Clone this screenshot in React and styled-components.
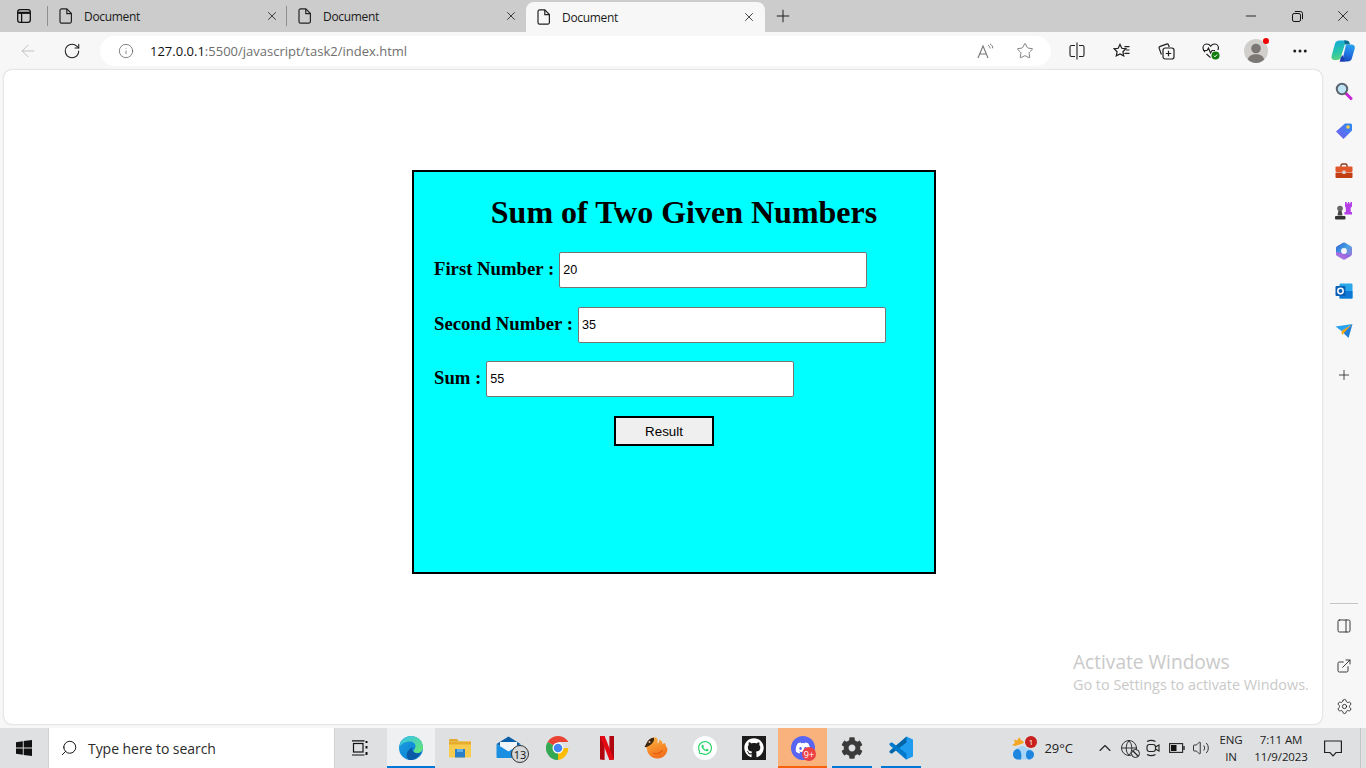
import styled, { createGlobalStyle } from "styled-components";
import {
  ArrowLeft,
  RotateCw,
  Info,
  Star,
  Plus,
  X,
  Minus,
  MoreHorizontal,
  Search,
  ChevronUp,
  Globe,
  Volume2,
  Settings,
  ExternalLink,
  PanelRight,
} from "lucide-react";
import { FaGithub, FaWhatsapp, FaDiscord, FaCog } from "react-icons/fa";

const GlobalStyle = createGlobalStyle`
  html, body {
    margin: 0;
    padding: 0;
    background: #f7f7f7;
    overflow: hidden;
  }
  * {
    box-sizing: border-box;
  }
`;

const uiFont = `"Open Sans", "Noto Sans", Arial, sans-serif`;

const Window = styled.div`
  width: 1366px;
  height: 768px;
  display: flex;
  flex-direction: column;
  overflow: hidden;
  font-family: ${uiFont};
  color: #1a1a1a;
`;

/* ---------- tab strip ---------- */
const TabStrip = styled.div`
  height: 32px;
  flex: none;
  display: flex;
  align-items: flex-end;
  background: #cccccc;
`;

const WorkspaceButton = styled.div`
  width: 47px;
  height: 32px;
  display: flex;
  align-items: center;
  justify-content: center;
`;

const TabSeparator = styled.div`
  width: 1px;
  height: 20px;
  margin-bottom: 6px;
  background: #8f8f8f;
`;

const Tab = styled.div`
  width: ${(p) => (p.$active ? "239px" : "238px")};
  height: ${(p) => (p.$active ? "30px" : "32px")};
  display: flex;
  align-items: center;
  padding: ${(p) => (p.$active ? "0 9px 0 11px" : "0 7px 0 11px")};
  background: ${(p) => (p.$active ? "#f7f7f7" : "transparent")};
  border-radius: ${(p) => (p.$active ? "8px 8px 0 0" : "0")};
  margin-left: ${(p) => (p.$active ? "1px" : "0")};
`;

const TabTitle = styled.span`
  margin-left: 11px;
  font-size: 12px;
  letter-spacing: -0.32px;
  flex: 1;
`;

const NewTab = styled.div`
  width: 36px;
  height: 32px;
  display: flex;
  align-items: center;
  justify-content: center;
`;

const WindowControls = styled.div`
  margin-left: auto;
  height: 32px;
  display: flex;
`;

const WindowButton = styled.div`
  width: 46px;
  display: flex;
  align-items: center;
  justify-content: center;
`;

/* ---------- toolbar ---------- */
const Toolbar = styled.div`
  height: 38px;
  flex: none;
  display: flex;
  align-items: center;
  background: #f7f7f7;
`;

const NavButton = styled.div`
  width: 44px;
  height: 30px;
  display: flex;
  align-items: center;
  justify-content: center;
`;

const NavGroup = styled.div`
  width: 100px;
  padding-left: 6px;
  display: flex;
`;

const AddressBar = styled.div`
  width: 951px;
  height: 30px;
  display: flex;
  align-items: center;
  padding: 0 17px 0 18px;
  background: #ffffff;
  border-radius: 15px;
`;

const Url = styled.div`
  margin-left: 16px;
  font-size: 13px;
  letter-spacing: 0;
  color: #6f6f6f;
  flex: 1;
`;

const UrlHost = styled.span`
  color: #111111;
`;

const AddressActions = styled.div`
  display: flex;
  align-items: center;
  gap: 22px;
`;

const ToolButtons = styled.div`
  display: flex;
  align-items: center;
  margin-left: 4px;
`;

const ToolButton = styled.div`
  width: ${(p) => (p.$narrow ? "41px" : "44.6px")};
  height: 30px;
  position: relative;
  display: flex;
  align-items: center;
  justify-content: center;
`;

const RedDot = styled.span`
  position: absolute;
  top: 2px;
  right: 9px;
  width: 6px;
  height: 6px;
  border-radius: 50%;
  background: #f00000;
`;

/* ---------- page area ---------- */
const Main = styled.div`
  flex: 1;
  display: flex;
  background: #f7f7f7;
  min-height: 0;
`;

const Page = styled.div`
  position: relative;
  width: 1318px;
  height: 654px;
  margin-left: 4px;
  background: #ffffff;
  border-radius: 8px;
  box-shadow: 0 0 2px rgba(0, 0, 0, 0.25);
  padding: 100px 0 0 408px;
`;

const Card = styled.div`
  width: 524px;
  height: 404px;
  border: 2px solid #000000;
  background: #00ffff;
  padding: 22px 0 0 20px;
  font-family: "Liberation Serif", "Times New Roman", serif;
  color: #000000;
`;

const Heading = styled.h1`
  margin: 0 0 21px;
  height: 37px;
  font-size: 32px;
  line-height: 37px;
  font-weight: 700;
  text-align: center;
`;

const FieldRow = styled.div`
  height: 36px;
  margin-bottom: 18.5px;
  display: flex;
  align-items: center;
  gap: 5px;
`;

const FieldLabel = styled.label`
  font-size: 18.72px;
  font-weight: 700;
  padding-bottom: 2px;
`;

const FieldInput = styled.input`
  width: 308px;
  height: 36px;
  padding: 1px 3px;
  border: 1px solid #767676;
  border-radius: 2px;
  background: #ffffff;
  font-family: "Liberation Sans", Arial, sans-serif;
  font-size: 12.6px;
  color: #000000;
`;

const ResultButton = styled.button`
  display: block;
  width: 100px;
  height: 30px;
  margin-left: 180px;
  padding: 2px 0 0;
  border: 2px solid #000000;
  border-radius: 0;
  background: #efefef;
  font-family: "Liberation Sans", Arial, sans-serif;
  font-size: 13.33px;
  color: #000000;
`;

const Watermark = styled.div`
  position: absolute;
  left: 1069px;
  top: 579px;
  color: #c9c9c9;
  pointer-events: none;
`;

const WatermarkTitle = styled.div`
  font-size: 19.1px;
  line-height: 27px;
`;

const WatermarkText = styled.div`
  font-size: 14.4px;
  line-height: 18px;
`;

/* ---------- edge sidebar ---------- */
const Sidebar = styled.div`
  flex: 1;
  height: 656px;
  display: flex;
  flex-direction: column;
  align-items: center;
  padding-top: 1px;
`;

const SideButton = styled.div`
  width: 44px;
  height: 40px;
  flex: none;
  display: flex;
  align-items: center;
  justify-content: center;
  margin-top: ${(p) => p.$gap || 0}px;
`;

const SideDivider = styled.div`
  width: 28px;
  height: 1px;
  margin-top: auto;
  margin-bottom: 2px;
  background: #c4c4c4;
`;

/* ---------- taskbar ---------- */
const Taskbar = styled.div`
  height: 40px;
  flex: none;
  display: flex;
  background: #dfe0e1;
`;

const StartButton = styled.div`
  width: 48px;
  display: flex;
  align-items: center;
  justify-content: center;
`;

const SearchBox = styled.div`
  width: 287px;
  display: flex;
  align-items: center;
  padding-left: 11px;
  background: #ffffff;
  border: 1px solid #cfd2d3;
  border-width: 0 1px;
`;

const SearchText = styled.span`
  margin-left: 10px;
  font-size: 14px;
  color: #2b2b2b;
  letter-spacing: -0.05px;
`;

const TaskView = styled.div`
  width: 52px;
  padding-right: 3px;
  display: flex;
  align-items: center;
  justify-content: center;
`;

const TaskItem = styled.div`
  position: relative;
  width: ${(p) => p.$width || 49}px;
  display: flex;
  align-items: center;
  justify-content: center;
  background: ${(p) => p.$bg || "transparent"};
  &::after {
    content: "";
    position: absolute;
    bottom: 0;
    left: ${(p) => (p.$wide ? "0" : "5px")};
    right: ${(p) => (p.$wide ? "0" : "4px")};
    height: 2px;
    background: ${(p) => p.$line || "transparent"};
  }
`;

const Badge = styled.span`
  position: absolute;
  font-family: ${uiFont};
  font-size: ${(p) => p.$size || 9}px;
  line-height: 1;
  display: flex;
  align-items: center;
  justify-content: center;
  border-radius: 50%;
  right: ${(p) => p.$right}px;
  top: ${(p) => p.$top}px;
  width: ${(p) => p.$box}px;
  height: ${(p) => p.$box}px;
  color: ${(p) => p.$color};
  background: ${(p) => p.$bg};
  border: ${(p) => p.$border || "none"};
`;

const Tray = styled.div`
  margin-left: auto;
  display: flex;
  align-items: center;
  height: 40px;
`;

const Weather = styled.div`
  position: relative;
  display: flex;
  align-items: center;
  gap: 9px;
  margin-right: 20px;
  font-size: 13px;
  color: #222222;
`;

const TrayIcon = styled.div`
  width: 24px;
  display: flex;
  align-items: center;
  justify-content: center;
`;

const TrayStack = styled.div`
  width: ${(p) => p.$w}px;
  display: flex;
  flex-direction: column;
  align-items: center;
  font-size: 11.5px;
  line-height: 17px;
  color: #222222;
  letter-spacing: -0.1px;
`;

const NotifyButton = styled.div`
  width: 29px;
  display: flex;
  justify-content: flex-end;
`;

const ShowDesktop = styled.div`
  width: 6px;
  height: 40px;
  margin-left: 18px;
  border-left: 1px solid #c3c6c7;
`;

const stroke = { strokeWidth: 1.4, color: "#1f1f1f" };

const DocIcon = () => (
  <svg width="14" height="16" viewBox="0 0 14 16" fill="none" stroke="#222" strokeWidth="1.2">
    <path d="M2.6.9h5.2l4.6 4.6v8a1.6 1.6 0 0 1-1.6 1.6H2.6A1.6 1.6 0 0 1 1 13.5V2.5A1.6 1.6 0 0 1 2.6.9z" />
    <path d="M7.8 1v4.6h4.6" />
  </svg>
);

const WorkspaceIcon = () => (
  <svg width="14" height="14" viewBox="0 0 14 14" fill="none" stroke="#111" strokeWidth="1.3">
    <rect x=".7" y=".7" width="12.6" height="12.6" rx="2.4" />
    <path d="M1 3.8h12" strokeWidth="2.2" />
    <path d="M4.6 4v9" />
  </svg>
);

const RestoreIcon = () => (
  <svg width="11" height="11" viewBox="0 0 11 11" fill="none" stroke="#111" strokeWidth="1">
    <rect x=".5" y="2.5" width="8" height="8" rx="1.6" />
    <path d="M2.8.5h5.6a2.1 2.1 0 0 1 2.1 2.1v5.600" />
  </svg>
);

const ReadAloudIcon = () => (
  <svg width="17" height="16" viewBox="0 0 17 16" fill="none" stroke="#777" strokeWidth="1.1">
    <path d="M1 15L6 3l5 12M2.8 11h6.400" />
    <path d="M11 2.200c1.300.8 2 2 2 3.200M13 .8c1.700 1 2.800 2.700 2.800 4.500" strokeWidth="1" />
  </svg>
);

const SplitIcon = () => (
  <svg width="16" height="18" viewBox="0 0 16 18" fill="none" stroke="#1f1f1f" strokeWidth="1.1">
    <path d="M6 3.500H2.500A1.500 1.500 0 0 0 1 5v8a1.500 1.500 0 0 0 1.500 1.500H6" />
    <path d="M10 3.500h3.500A1.500 1.500 0 0 1 15 5v8a1.500 1.500 0 0 1-1.500 1.500H10" />
    <path d="M8 .5v17" />
  </svg>
);

const FavListIcon = () => (
  <svg width="18" height="17" viewBox="0 0 18 17" fill="none" stroke="#1f1f1f" strokeWidth="1.2">
    <path d="M7 1.400l1.800 3.900 4.100.5-3 2.900.8 4.200L7 10.900l-3.700 2 .8-4.200-3-2.900 4.100-.5z" />
    <path d="M11.500 3.600h5M13 7h3.500M11.500 10.400h5" />
  </svg>
);

const CollectionsIcon = () => (
  <svg width="17" height="17" viewBox="0 0 17 17" fill="none" stroke="#1f1f1f" strokeWidth="1.2">
    <path d="M3.400 11.500L1.200 5.400a1.600 1.600 0 0 1 1-2L8.500 1.100a1.600 1.600 0 0 1 2 .9l.7 2" />
    <rect x="5" y="5" width="11" height="11" rx="2.200" />
    <path d="M10.500 7.800v5.400M7.800 10.500h5.400" />
  </svg>
);

const HealthIcon = () => (
  <svg width="18" height="18" viewBox="0 0 18 18" fill="none">
    <path
      d="M3 10.200C1.800 8.800 1 7.600 1 5.800 1 3.600 2.800 2 4.800 2c1.600 0 3 .8 3.900 2.200C9.600 2.800 11 2 12.600 2c2 0 3.800 1.600 3.800 3.800 0 .8-.2 1.500-.5 2.200M4.500 12l4 3.600"
      stroke="#1f1f1f"
      strokeWidth="1.2"
    />
    <path d="M1 8.500h4l1.500-2.500 2 5 1.500-2.500h3" stroke="#1f1f1f" strokeWidth="1.1" />
    <circle cx="13.500" cy="13.500" r="4" fill="#107c10" />
    <path d="M11.800 13.600l1.200 1.200 2.200-2.400" stroke="#fff" strokeWidth="1" />
  </svg>
);

const ProfileIcon = () => (
  <svg width="24" height="24" viewBox="0 0 24 24">
    <circle cx="12" cy="12" r="12" fill="#d1cfcc" />
    <circle cx="12" cy="9.500" r="4.800" fill="#7a7774" />
    <path d="M3.800 20.500c1-3.800 4-5.300 8.200-5.300s7.200 1.500 8.200 5.300A12 12 0 0 1 12 24a12 12 0 0 1-8.200-3.500z" fill="#7a7774" />
  </svg>
);

const CopilotIcon = () => (
  <svg width="24" height="24" viewBox="0 0 24 24">
    <defs>
      <linearGradient id="copA" x1="0.3" y1="0" x2="0.5" y2="1">
        <stop offset="0" stopColor="#16a8d8" />
        <stop offset="0.6" stopColor="#27c6a8" />
        <stop offset="1" stopColor="#5fd47c" />
      </linearGradient>
      <linearGradient id="copB" x1="0.6" y1="0" x2="0.4" y2="1">
        <stop offset="0" stopColor="#2aa0ee" />
        <stop offset="0.6" stopColor="#1f6fe0" />
        <stop offset="1" stopColor="#1a48b8" />
      </linearGradient>
    </defs>
    <path d="M8.500 1.500H15L10 18c-.6 2-2 3-4 3H3.500C1.200 21 0 19.200.6 17L3.800 5.200C4.500 2.800 6 1.500 8.500 1.500z" fill="url(#copA)" />
    <path d="M13 1.500h2.500c1.500 0 2.500.8 3 2.300l.5 1.700H14z" fill="#0b6a8f" />
    <path d="M15 5.500h5.500c2.300 0 3.800 1.800 3.200 4L21 19c-.7 2.600-2.400 3.500-4.500 3.500H8c2 0 3.200-1.300 3.800-3.200z" fill="url(#copB)" />
    <path d="M9.500 19l2-3 2.500 6.500H8.500c.5-.3.800-2 1-3.500z" fill="#1c3fb0" />
  </svg>
);

const MagnifierIcon = () => (
  <svg width="18" height="18" viewBox="0 0 18 18">
    <path d="M10.500 11l5.500 5.500" stroke="#c724d8" strokeWidth="3" strokeLinecap="round" />
    <circle cx="7" cy="7" r="5.200" fill="#bfe3f5" stroke="#5b6670" strokeWidth="2" />
  </svg>
);

const TagIcon = () => (
  <svg width="18" height="18" viewBox="0 0 18 18">
    <defs>
      <linearGradient id="tagA" x1="0" y1="1" x2="1" y2="0">
        <stop offset="0" stopColor="#7a5cf0" />
        <stop offset="1" stopColor="#2a8cf0" />
      </linearGradient>
    </defs>
    <path d="M10 1.500h5.500a1.500 1.500 0 0 1 1.500 1.500v5.500L8.500 17 1 9.500z" fill="url(#tagA)" />
    <circle cx="13" cy="5" r="1.800" fill="#f6d04d" />
  </svg>
);

const ToolboxIcon = () => (
  <svg width="18" height="16" viewBox="0 0 18 16">
    <path d="M6 4V2.500C6 1.700 6.700 1 7.500 1h3c.8 0 1.500.7 1.500 1.500V4" fill="none" stroke="#8a3a1a" strokeWidth="1.400" />
    <rect x="0.500" y="3.500" width="17" height="5.500" rx="1" fill="#e0572a" />
    <rect x="0.500" y="9.500" width="17" height="5.500" rx="1" fill="#c43e14" />
    <rect x="7.500" y="7.500" width="3" height="3.500" rx=".6" fill="#d8d8d8" />
  </svg>
);

const ChessIcon = () => (
  <svg width="18" height="18" viewBox="0 0 18 18">
    <path d="M10 0h1.600v1.500h1.300V0h1.300v1.500h1.300V0H17v4.500l-1.300 1.200V10H17v2.500H9.500V10h1.300V5.700L10 4.500z" fill="#b43ee8" />
    <circle cx="5" cy="6.500" r="2.800" fill="#666" />
    <path d="M3.300 9h3.400l.8 4.500H2.500z" fill="#4a4a4a" />
    <rect x="0" y="14" width="10.500" height="3.500" rx="1" fill="#333" />
  </svg>
);

const M365Icon = () => (
  <svg width="18" height="18" viewBox="0 0 18 18">
    <defs>
      <linearGradient id="msA" x1="0" y1="0" x2="1" y2="1">
        <stop offset="0" stopColor="#2a5fd8" />
        <stop offset="0.5" stopColor="#4aa3e0" />
        <stop offset="1" stopColor="#b668d8" />
      </linearGradient>
      <linearGradient id="msB" x1="0" y1="1" x2="1" y2="0">
        <stop offset="0" stopColor="#c67ae0" />
        <stop offset="1" stopColor="#7a5ce0" />
      </linearGradient>
    </defs>
    <path d="M8 .8a2 2 0 0 1 2 0l6 3.400a2 2 0 0 1 1 1.700v6.200a2 2 0 0 1-1 1.700l-6 3.400a2 2 0 0 1-2 0l-6-3.400a2 2 0 0 1-1-1.700V5.900a2 2 0 0 1 1-1.700z" fill="url(#msA)" />
    <path d="M1 10v2.100c0 .7.400 1.300 1 1.700l6 3.400c.6.400 1.400.4 2 0l6-3.400-7-2.800z" fill="url(#msB)" />
    <circle cx="9" cy="9" r="2.900" fill="#f7f7f7" />
  </svg>
);

const OutlookIcon = () => (
  <svg width="18" height="18" viewBox="0 0 18 18">
    <rect x="4.500" y="1.500" width="13" height="15" rx="1" fill="#28a8ea" />
    <rect x="4.500" y="9" width="13" height="7.500" fill="#0f78d4" />
    <rect x="0.500" y="4" width="10" height="10" rx="1" fill="#0a5fb4" />
    <circle cx="5.500" cy="9" r="2.700" fill="none" stroke="#fff" strokeWidth="1.500" />
  </svg>
);

const SendIcon = () => (
  <svg width="18" height="16" viewBox="0 0 18 16">
    <path d="M0.500 3.500L17.500 1 6.500 8z" fill="#2aa3ef" />
    <path d="M6.500 8L17.500 1l-4 14z" fill="#1f7fd8" />
    <path d="M6.500 8l10-6-9.500 10z" fill="#f4a818" />
  </svg>
);

const WindowsLogo = () => (
  <svg width="16" height="16" viewBox="0 0 16 16" fill="#111">
    <path d="M0 2.200L6.800 1.200v6.400H0zM7.700 1.100L16 0v7.600H7.700zM0 8.400h6.800v6.400L0 13.800zM7.700 8.400H16V16l-8.300-1.100z" />
  </svg>
);

const TaskViewIcon = () => (
  <svg width="16" height="16" viewBox="0 0 16 16" fill="none" stroke="#111" strokeWidth="1.200">
    <rect x="1.500" y="3.500" width="9.500" height="8.500" />
    <path d="M0 .8h12.500M0 15h12.500" />
    <path d="M14.500 1v2M14.500 6v2.500M14.500 12v3" strokeWidth="2" />
  </svg>
);

const EdgeIcon = () => (
  <svg width="24" height="24" viewBox="0 0 24 24">
    <defs>
      <linearGradient id="edB" x1="0" y1="0" x2="1" y2="1">
        <stop offset="0" stopColor="#1b9de2" />
        <stop offset="1" stopColor="#0a7ed0" />
      </linearGradient>
      <linearGradient id="edC" x1="0" y1="0" x2="1" y2="1">
        <stop offset="0" stopColor="#35c1f1" />
        <stop offset="1" stopColor="#66eb6e" />
      </linearGradient>
    </defs>
    <circle cx="12" cy="12" r="12" fill="url(#edB)" />
    <path d="M0 12C1 5 6 0 12 0c7 0 12 5 12 11.500 0 3.500-3 5.500-6 5.500-2 0-3.500-1-3.500-2 0-1 2-2 2-4.500C16.500 7.500 14 5.500 11 5.500 5.500 5.500 1.500 8 0 12z" fill="url(#edC)" />
    <path d="M10 24c-2.500-2-3-6-1-9 1.500-2.500 4-3.500 5.500-3.500-1 1-2 2-.5 4s5 2.500 8 1C20 21 15 25 10 24z" fill="#0b5aa8" />
  </svg>
);

const ExplorerIcon = () => (
  <svg width="24" height="22" viewBox="0 0 24 22">
    <path d="M1 3.500C1 2.700 1.700 2 2.500 2H9l2 2.500h-10z" fill="#e0a82e" />
    <rect x="1" y="4.500" width="22" height="16" rx="1" fill="#f7cb4d" />
    <rect x="1" y="4.500" width="22" height="3" fill="#e8ad2e" />
    <rect x="7" y="12" width="10" height="8.500" fill="#2c7fc9" />
    <rect x="9" y="12" width="6" height="3" fill="#5fb0e8" />
  </svg>
);

const MailIcon = () => (
  <svg width="26" height="24" viewBox="0 0 26 24">
    <path d="M0.500 8L12.500 .5 24.500 8 12.500 15z" fill="#0a5fa8" />
    <path d="M4 6h17v7l-8.500 4L4 13z" fill="#f2f6fa" />
    <path d="M.500 8v13c0 .6.400 1 1 1h22c.6 0 1-.4 1-1V8l-12 7.500z" fill="#1a8ee0" />
  </svg>
);

const ChromeIcon = () => (
  <svg width="24" height="24" viewBox="0 0 24 24">
    <path d="M12 12L1.600 6A12 12 0 0 1 22.400 6H12z" fill="#ea4335" />
    <path d="M12 12H22.400A12 12 0 0 1 12 24z" fill="#fbbc04" />
    <path d="M12 12V24A12 12 0 0 1 1.600 6z" fill="#34a853" />
    <circle cx="12" cy="12" r="5.500" fill="#fff" />
    <circle cx="12" cy="12" r="4.300" fill="#4285f4" />
  </svg>
);

const NetflixIcon = () => (
  <svg width="14" height="24" viewBox="0 0 14 24">
    <path d="M0 0h4.600v24L0 23.500z" fill="#b0060f" />
    <path d="M9.400 0H14v23.500L9.400 24z" fill="#b0060f" />
    <path d="M0 0h4.600L14 23.500 9.400 24z" fill="#e50914" />
  </svg>
);

const BirdIcon = () => (
  <svg width="24" height="24" viewBox="0 0 24 24">
    <defs>
      <linearGradient id="brd" x1="0.300" y1="0" x2="0.700" y2="1">
        <stop offset="0" stopColor="#fbb03b" />
        <stop offset="1" stopColor="#f26a1b" />
      </linearGradient>
    </defs>
    <path d="M1 10.500L8 2c2.500-1.500 4.500-.5 5.500 1.500.5 1.500 0 3-.5 4l2-1 .5-3 2.500 2 .5 2.500 2.500-1L22 10l1.500 3c-.3 5.500-4.500 9.500-10 9.500-6 0-10.500-4.500-10.500-10z" fill="url(#brd)" />
    <path d="M.5 11l3-5.500C5 3 7.500 1.500 10 1.700c.5 2.500-1 5.500-4 7.500-2 1.300-4 1.800-5.500 1.800z" fill="#3b2412" />
    <circle cx="5.500" cy="6" r="1" fill="#e8c9a0" />
    <path d="M9 17c3 1.500 7 .5 9.500-2.500" fill="none" stroke="#e85a10" strokeWidth="1.300" />
  </svg>
);

const VsCodeIcon = () => (
  <svg width="24" height="24" viewBox="0 0 24 24">
    <path d="M17.500.5L24 3.500v17l-6.500 3L7 13.500 11 10.500z" fill="#1f9cf0" />
    <path d="M17.500.5L17.500 6.500 7.500 14 2.800 17.800.5 16.500v-1.500L17.500.5z" fill="#0065a9" />
    <path d="M.500 7.500v1.500l16.500 14.500.500 0V17.500L2.800 6.200z" fill="#007acc" />
  </svg>
);

const WeatherIcon = () => (
  <svg width="24" height="26" viewBox="0 0 24 26">
    <path d="M4 11L1 10l3-2-1-3.500 3.500 1L8 2l2 3c1.500.5 2.500 1.500 3 3z" fill="#f5a623" />
    <path d="M2 19a5.500 5.500 0 0 1 5-6c1.500-2.500 7-3 9 .5 4-.5 7 2.500 7 5.500a5.500 5.500 0 0 1-5.500 5.500H7A5 5 0 0 1 2 19z" fill="#a8d4f5" />
    <path d="M7 14c3 1 4 5 3 10.500H7c-3 0-5-2.500-5-5 0-3 2-5.500 5-5.500zM18 15c3 .5 5 2 5 4.500s-2 5-5 5c-2-.5-3-2-3-4.500 0-3 1-4.500 3-5z" fill="#1f86e0" />
  </svg>
);

const GlobeStatusIcon = () => (
  <span style={{ position: "relative", display: "flex" }}>
    <Globe size={18} strokeWidth={1.2} color="#222" />
    <svg width="9" height="9" viewBox="0 0 9 9" style={{ position: "absolute", right: -2, bottom: -1 }}>
      <circle cx="4.500" cy="4.500" r="4" fill="#dfe0e1" stroke="#222" strokeWidth="1" />
      <path d="M2 2l5 5" stroke="#222" strokeWidth="1.200" />
    </svg>
  </span>
);

const CameraIcon = () => (
  <svg width="16" height="18" viewBox="0 0 16 18" fill="none" stroke="#222" strokeWidth="1.100">
    <rect x="2" y="5.500" width="8.500" height="7" rx="2.500" />
    <path d="M10.500 8l3.500-2v6l-3.500-2" />
    <path d="M2 2.500c2.500-1.300 6-1.300 8.500 0M2 15.500c2.500 1.300 6 1.300 8.500 0" />
  </svg>
);

const BatteryIcon = () => (
  <svg width="16" height="10" viewBox="0 0 16 10" fill="none" stroke="#222" strokeWidth="1.100">
    <rect x=".6" y=".6" width="13" height="8.800" />
    <rect x="2" y="2" width="5.500" height="6" fill="#111" stroke="none" />
    <path d="M15 3v4" strokeWidth="1.400" />
  </svg>
);

const NotifyIcon = () => (
  <svg width="18" height="17" viewBox="0 0 18 17" fill="none" stroke="#222" strokeWidth="1.200">
    <path d="M.6 1h16.800v11.500h-5.400L9 15.800 6 12.500H.6z" />
  </svg>
);

export default function App() {
  return (
    <>
      <GlobalStyle />
      <Window>
        <TabStrip>
          <WorkspaceButton>
            <WorkspaceIcon />
          </WorkspaceButton>
          <TabSeparator />
          <Tab>
            <DocIcon />
            <TabTitle>Document</TabTitle>
            <X size={14} {...stroke} />
          </Tab>
          <TabSeparator />
          <Tab>
            <DocIcon />
            <TabTitle>Document</TabTitle>
            <X size={14} {...stroke} />
          </Tab>
          <Tab $active>
            <DocIcon />
            <TabTitle>Document</TabTitle>
            <X size={14} {...stroke} />
          </Tab>
          <NewTab>
            <Plus size={20} strokeWidth={1.2} color="#1f1f1f" />
          </NewTab>
          <WindowControls>
            <WindowButton>
              <Minus size={16} strokeWidth={1.3} color="#111" />
            </WindowButton>
            <WindowButton>
              <RestoreIcon />
            </WindowButton>
            <WindowButton>
              <X size={18} strokeWidth={1.1} color="#111" />
            </WindowButton>
          </WindowControls>
        </TabStrip>

        <Toolbar>
          <NavGroup>
            <NavButton>
              <ArrowLeft size={20} strokeWidth={1.1} color="#bcbcbc" />
            </NavButton>
            <NavButton>
              <RotateCw size={18} strokeWidth={1.4} color="#1f1f1f" />
            </NavButton>
          </NavGroup>
          <AddressBar>
            <Info size={16} strokeWidth={1.2} color="#666" />
            <Url>
              <UrlHost>127.0.0.1</UrlHost>:5500/javascript/task2/index.html
            </Url>
            <AddressActions>
              <ReadAloudIcon />
              <Star size={18} strokeWidth={1.1} color="#666" />
            </AddressActions>
          </AddressBar>
          <ToolButtons>
            <ToolButton>
              <SplitIcon />
            </ToolButton>
            <ToolButton>
              <FavListIcon />
            </ToolButton>
            <ToolButton>
              <CollectionsIcon />
            </ToolButton>
            <ToolButton>
              <HealthIcon />
            </ToolButton>
            <ToolButton>
              <ProfileIcon />
              <RedDot />
            </ToolButton>
            <ToolButton>
              <MoreHorizontal size={18} strokeWidth={2} color="#1f1f1f" />
            </ToolButton>
            <ToolButton $narrow>
              <CopilotIcon />
            </ToolButton>
          </ToolButtons>
        </Toolbar>

        <Main>
          <Page>
            <Card>
              <Heading>Sum of Two Given Numbers</Heading>
              <FieldRow>
                <FieldLabel>First Number :</FieldLabel>
                <FieldInput defaultValue="20" />
              </FieldRow>
              <FieldRow>
                <FieldLabel>Second Number :</FieldLabel>
                <FieldInput defaultValue="35" />
              </FieldRow>
              <FieldRow>
                <FieldLabel>Sum :</FieldLabel>
                <FieldInput defaultValue="55" />
              </FieldRow>
              <ResultButton>Result</ResultButton>
            </Card>
            <Watermark>
              <WatermarkTitle>Activate Windows</WatermarkTitle>
              <WatermarkText>Go to Settings to activate Windows.</WatermarkText>
            </Watermark>
          </Page>
          <Sidebar>
            <SideButton>
              <MagnifierIcon />
            </SideButton>
            <SideButton>
              <TagIcon />
            </SideButton>
            <SideButton>
              <ToolboxIcon />
            </SideButton>
            <SideButton>
              <ChessIcon />
            </SideButton>
            <SideButton>
              <M365Icon />
            </SideButton>
            <SideButton>
              <OutlookIcon />
            </SideButton>
            <SideButton>
              <SendIcon />
            </SideButton>
            <SideButton $gap={4}>
              <Plus size={16} strokeWidth={1.2} color="#1f1f1f" />
            </SideButton>
            <SideDivider />
            <SideButton>
              <PanelRight size={16} strokeWidth={1.3} color="#1f1f1f" />
            </SideButton>
            <SideButton>
              <ExternalLink size={16} strokeWidth={1.3} color="#1f1f1f" />
            </SideButton>
            <SideButton>
              <Settings size={17} strokeWidth={1.2} color="#1f1f1f" />
            </SideButton>
          </Sidebar>
        </Main>

        <Taskbar>
          <StartButton>
            <WindowsLogo />
          </StartButton>
          <SearchBox>
            <Search size={18} strokeWidth={1.3} color="#111" style={{ transform: "scaleX(-1)" }} />
            <SearchText>Type here to search</SearchText>
          </SearchBox>
          <TaskView>
            <TaskViewIcon />
          </TaskView>
          <TaskItem $width={48} $bg="#eef0f1" $line="#0078d4" $wide>
            <EdgeIcon />
          </TaskItem>
          <TaskItem>
            <ExplorerIcon />
          </TaskItem>
          <TaskItem>
            <MailIcon />
            <Badge $right={4} $top={17} $box={18} $size={11} $color="#111" $bg="#d5d7d8" $border="1px solid #333">
              13
            </Badge>
          </TaskItem>
          <TaskItem>
            <ChromeIcon />
          </TaskItem>
          <TaskItem>
            <NetflixIcon />
          </TaskItem>
          <TaskItem>
            <BirdIcon />
          </TaskItem>
          <TaskItem>
            <FaWhatsapp size={16} color="#25d366" style={{ background: "#fff", borderRadius: "50%", padding: 4, width: 24, height: 24 }} />
          </TaskItem>
          <TaskItem>
            <FaGithub size={20} color="#fff" style={{ background: "#1b1b1b", padding: 2, width: 24, height: 24 }} />
          </TaskItem>
          <TaskItem $bg="#f9b27c" $line="#f7630c" $wide>
            <FaDiscord size={16} color="#fff" style={{ background: "#5865f2", borderRadius: "50%", padding: 4, width: 24, height: 24 }} />
            <Badge $right={11} $top={19} $box={14} $size={9} $color="#fff" $bg="#ed4245">
              9+
            </Badge>
          </TaskItem>
          <TaskItem $line="#0078d4">
            <FaCog size={22} color="#3b3b3b" />
          </TaskItem>
          <TaskItem $line="#0078d4">
            <VsCodeIcon />
          </TaskItem>
          <Tray>
            <Weather>
              <WeatherIcon />
              <Badge $right={36} $top={1} $box={12} $size={8} $color="#fff" $bg="#c8201c">
                1
              </Badge>
              <span>29°C</span>
            </Weather>
            <TrayIcon>
              <ChevronUp size={20} strokeWidth={1.3} color="#222" />
            </TrayIcon>
            <TrayIcon>
              <GlobeStatusIcon />
            </TrayIcon>
            <TrayIcon>
              <CameraIcon />
            </TrayIcon>
            <TrayIcon>
              <BatteryIcon />
            </TrayIcon>
            <TrayIcon>
              <Volume2 size={18} strokeWidth={1.2} color="#222" />
            </TrayIcon>
            <TrayStack $w={36}>
              <span>ENG</span>
              <span>IN</span>
            </TrayStack>
            <TrayStack $w={64}>
              <span>7:11 AM</span>
              <span>11/9/2023</span>
            </TrayStack>
            <NotifyButton>
              <NotifyIcon />
            </NotifyButton>
            <ShowDesktop />
          </Tray>
        </Taskbar>
      </Window>
    </>
  );
}
